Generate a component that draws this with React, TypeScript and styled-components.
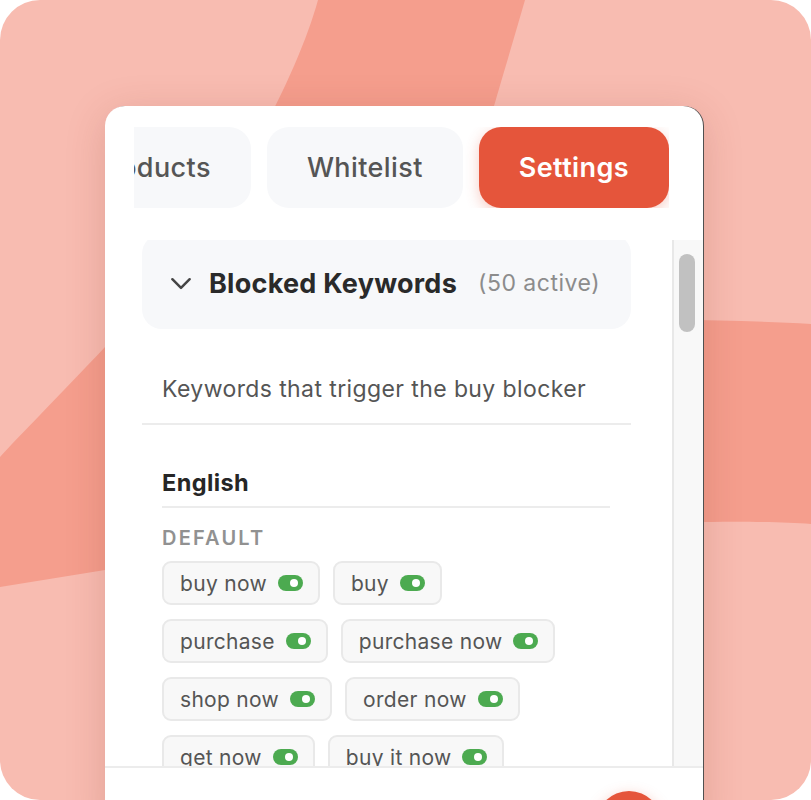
import React from "react";
import styled, { createGlobalStyle } from "styled-components";

const GlobalStyle = createGlobalStyle`
  html, body { margin: 0; padding: 0; background: #ffffff; }
  body { font-family: Inter, "Noto Sans", "Liberation Sans", sans-serif; -webkit-font-smoothing: antialiased; }
  * { box-sizing: border-box; }
`;

const Frame = styled.div`
  position: relative;
  width: 811px;
  height: 800px;
  border-radius: 40px;
  background: #f8bcb1;
  overflow: hidden;
  padding: 106px 0 0 105px;
`;

const Art = styled.svg`
  position: absolute;
  inset: 0;
  width: 811px;
  height: 800px;
`;

const Panel = styled.div`
  position: relative;
  z-index: 1;
  width: 598px;
  height: 720px;
  background: #ffffff;
  border-radius: 20px 20px 0 0;
  box-shadow: 1px 0 0 #505050, 0 8px 40px rgba(120, 40, 30, 0.18);
  display: flex;
  flex-direction: column;
`;

const TabsBar = styled.div`
  margin: 21px 34px 0 29px;
  height: 81px;
  overflow: hidden;
  display: flex;
  justify-content: flex-end;
  gap: 16px;
  flex-shrink: 0;
`;

const Tab = styled.div<{ $active?: boolean }>`
  flex-shrink: 0;
  height: 81px;
  padding: 0 40px;
  border-radius: 22px;
  display: flex;
  align-items: center;
  justify-content: center;
  font-size: 27px;
  letter-spacing: 0.4px;
  font-weight: ${(p) => (p.$active ? 600 : 500)};
  color: ${(p) => (p.$active ? "#ffffff" : "#555555")};
  background: ${(p) => (p.$active ? "#e5553b" : "#f7f8fa")};
  box-shadow: ${(p) => (p.$active ? "0 4px 14px rgba(229, 85, 59, 0.3)" : "none")};
`;

const Body = styled.div`
  margin-top: 32px;
  height: 526px;
  display: flex;
  flex-shrink: 0;
`;

const Scroll = styled.div`
  flex: 1;
  overflow: hidden;
  padding: 0 41px 0 37px;
`;

const Track = styled.div`
  width: 31px;
  background: #f8f8f8;
  border-left: 2px solid #e8e8e8;
  padding: 14px 0 0 5px;
`;

const Thumb = styled.div`
  width: 16px;
  height: 78px;
  border-radius: 8px;
  background: #c1c1c1;
`;

const HeaderCard = styled.div`
  margin-top: -6px;
  height: 95px;
  padding: 3px 0 0 26px;
  border-radius: 20px;
  background: #f7f8fa;
  display: flex;
  align-items: center;
`;

const Chevron = styled.svg`
  width: 26px;
  height: 26px;
  margin-right: 15px;
  flex-shrink: 0;
`;

const Title = styled.span`
  font-size: 27px;
  font-weight: 700;
  color: #2a2a2a;
  letter-spacing: 0.25px;
`;

const Count = styled.span`
  margin-left: 21px;
  font-size: 23px;
  font-weight: 400;
  color: #8c8c8c;
  letter-spacing: 0.5px;
`;

const Description = styled.div`
  padding: 44px 20px 18px;
  line-height: 32px;
  font-size: 23px;
  color: #555555;
  letter-spacing: 0.4px;
  border-bottom: 2px solid #ececec;
`;

const Section = styled.div`
  padding: 0 21px 0 20px;
`;

const LangTitle = styled.div`
  margin-top: 43px;
  padding-bottom: 8px;
  line-height: 30px;
  font-size: 23.5px;
  font-weight: 700;
  color: #262626;
  letter-spacing: 0.4px;
  border-bottom: 2px solid #ececec;
`;

const GroupLabel = styled.div`
  margin-top: 18px;
  line-height: 24px;
  font-size: 20px;
  font-weight: 600;
  letter-spacing: 2.2px;
  color: #919191;
  text-transform: uppercase;
`;

const Chips = styled.div`
  margin-top: 11px;
  display: flex;
  flex-wrap: wrap;
  gap: 14px 13px;
`;

const Chip = styled.div`
  height: 44px;
  display: inline-flex;
  align-items: center;
  gap: 11px;
  padding: 0 15px 0 16px;
  border: 2px solid #e9e9e9;
  border-radius: 9px;
  background: #f8f8f8;
  font-size: 21px;
  color: #555555;
  letter-spacing: 0.3px;
`;

const Toggle = styled.span<{ $on?: boolean }>`
  position: relative;
  width: 25px;
  height: 16px;
  border-radius: 8px;
  background: ${(p) => (p.$on ? "#4caa50" : "#cccccc")};
  flex-shrink: 0;
  &::after {
    content: "";
    position: absolute;
    top: 4px;
    ${(p) => (p.$on ? "right: 5px;" : "left: 5px;")}
    width: 8px;
    height: 8px;
    border-radius: 50%;
    background: #ffffff;
  }
`;

const Footer = styled.div`
  position: relative;
  flex: 1;
  border-top: 2px solid #ececec;
`;

const Fab = styled.div`
  position: absolute;
  top: 23px;
  left: 491px;
  width: 66px;
  height: 66px;
  border-radius: 50%;
  background: #e5553b;
  box-shadow: 0 4px 14px rgba(229, 85, 59, 0.35);
`;

const keywords = [
  "buy now",
  "buy",
  "purchase",
  "purchase now",
  "shop now",
  "order now",
  "get now",
  "buy it now",
  "add to cart",
  "checkout",
];

export default function App() {
  return (
    <>
      <GlobalStyle />
      <Frame>
        <Art viewBox="0 0 811 800" aria-hidden="true">
          <path
            fill="#f59e8d"
            d="M318,0 L525,0 C512,45 500,85 494,106 C470,200 455,270 440,320 C560,318 700,318 811,324 L811,524 C700,516 400,530 105,570 L0,587 L0,457 C20,435 60,395 105,347 C220,230 296,80 318,0 Z"
          />
        </Art>
        <Panel>
          <TabsBar>
            <Tab>Products</Tab>
            <Tab>Whitelist</Tab>
            <Tab $active>Settings</Tab>
          </TabsBar>
          <Body>
            <Scroll>
              <HeaderCard>
                <Chevron viewBox="0 0 24 24" fill="none" stroke="#444" strokeWidth="2.3" strokeLinecap="round" strokeLinejoin="round">
                  <path d="M4 8.5l8 8 8-8" />
                </Chevron>
                <Title>Blocked Keywords</Title>
                <Count>(50 active)</Count>
              </HeaderCard>
              <Description>Keywords that trigger the buy blocker</Description>
              <Section>
                <LangTitle>English</LangTitle>
                <GroupLabel>Default</GroupLabel>
                <Chips>
                  {keywords.map((k) => (
                    <Chip key={k}>
                      {k}
                      <Toggle $on />
                    </Chip>
                  ))}
                </Chips>
              </Section>
            </Scroll>
            <Track>
              <Thumb />
            </Track>
          </Body>
          <Footer>
            <Fab />
          </Footer>
        </Panel>
      </Frame>
    </>
  );
}
